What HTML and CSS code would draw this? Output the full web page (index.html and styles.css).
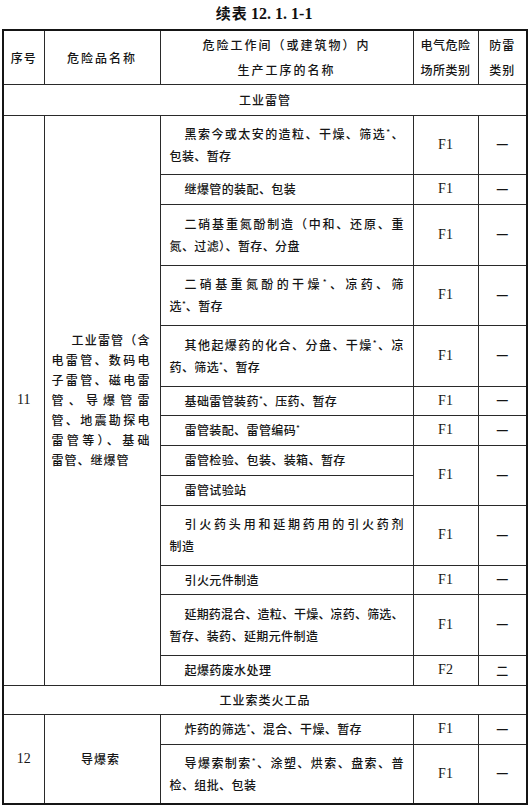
FILE: index.html
```html
<!DOCTYPE html>
<html lang="zh-CN">
<head>
<meta charset="utf-8">
<title>续表 12.1.1-1</title>
<link rel="stylesheet" href="styles.css">
</head>
<body>
<div class="title"><span class="cjk">续表</span> <span class="num">12. 1. 1-1</span></div>
<table class="tbl">
  <colgroup>
    <col class="c1"><col class="c2"><col class="c3"><col class="c4"><col class="c5">
  </colgroup>
  <thead>
    <tr class="r54">
      <th class="hd-no">序号</th>
      <th class="hd-name">危险品名称</th>
      <th class="hd-proc">危险工作间（或建筑物）内<br>生产工序的名称</th>
      <th class="hd-zone">电气危险<br>场所类别</th>
      <th class="hd-cls">防雷<br>类别</th>
    </tr>
  </thead>
  <tbody>
    <tr class="r31"><td colspan="5" class="sec">工业雷管</td></tr>
    <tr class="r59">
      <td rowspan="13" class="no">11</td>
      <td rowspan="13" class="name">
        <span class="nl j ind">工业雷管（含</span>
        <span class="nl j">电雷管、数码电</span>
        <span class="nl j">子雷管、磁电雷</span>
        <span class="nl j">管、导爆管雷</span>
        <span class="nl j">管、地震勘探电</span>
        <span class="nl j">雷管等）、基础</span>
        <span class="nl">雷管、继爆管</span>
      </td>
      <td class="proc"><span class="ln j ind">黑索今或太安的造粒、干燥、筛选<sup class="ast">*</sup>、</span><span class="ln">包装、暂存</span></td>
      <td class="zone">F1</td>
      <td class="cls">一</td>
    </tr>
    <tr class="r30">
      <td class="proc"><span class="ln ind">继爆管的装配、包装</span></td>
      <td class="zone">F1</td>
      <td class="cls">一</td>
    </tr>
    <tr class="r61">
      <td class="proc"><span class="ln j ind">二硝基重氮酚制造（中和、还原、重</span><span class="ln">氮、过滤）、暂存、分盘</span></td>
      <td class="zone">F1</td>
      <td class="cls">一</td>
    </tr>
    <tr class="r60">
      <td class="proc"><span class="ln j ind">二硝基重氮酚的干燥<sup class="ast">*</sup>、凉药、筛</span><span class="ln">选<sup class="ast">*</sup>、暂存</span></td>
      <td class="zone">F1</td>
      <td class="cls">一</td>
    </tr>
    <tr class="r61">
      <td class="proc"><span class="ln j ind">其他起爆药的化合、分盘、干燥<sup class="ast">*</sup>、凉</span><span class="ln">药、筛选<sup class="ast">*</sup>、暂存</span></td>
      <td class="zone">F1</td>
      <td class="cls">一</td>
    </tr>
    <tr class="r29">
      <td class="proc"><span class="ln ind">基础雷管装药<sup class="ast">*</sup>、压药、暂存</span></td>
      <td class="zone">F1</td>
      <td class="cls">一</td>
    </tr>
    <tr class="r30">
      <td class="proc"><span class="ln ind">雷管装配、雷管编码<sup class="ast">*</sup></span></td>
      <td class="zone">F1</td>
      <td class="cls">一</td>
    </tr>
    <tr class="r30">
      <td class="proc"><span class="ln ind">雷管检验、包装、装箱、暂存</span></td>
      <td rowspan="2" class="zone">F1</td>
      <td rowspan="2" class="cls">一</td>
    </tr>
    <tr class="r30">
      <td class="proc"><span class="ln ind">雷管试验站</span></td>
    </tr>
    <tr class="r60">
      <td class="proc"><span class="ln j ind">引火药头用和延期药用的引火药剂</span><span class="ln">制造</span></td>
      <td class="zone">F1</td>
      <td class="cls">一</td>
    </tr>
    <tr class="r29">
      <td class="proc"><span class="ln ind">引火元件制造</span></td>
      <td class="zone">F1</td>
      <td class="cls">一</td>
    </tr>
    <tr class="r61">
      <td class="proc"><span class="ln j ind">延期药混合、造粒、干燥、凉药、筛选、</span><span class="ln">暂存、装药、延期元件制造</span></td>
      <td class="zone">F1</td>
      <td class="cls">一</td>
    </tr>
    <tr class="r30">
      <td class="proc"><span class="ln ind">起爆药废水处理</span></td>
      <td class="zone">F2</td>
      <td class="cls">二</td>
    </tr>
    <tr class="r29"><td colspan="5" class="sec">工业索类火工品</td></tr>
    <tr class="r30">
      <td rowspan="2" class="no">12</td>
      <td rowspan="2" class="name name-c">导爆索</td>
      <td class="proc"><span class="ln ind">炸药的筛选<sup class="ast">*</sup>、混合、干燥、暂存</span></td>
      <td class="zone">F1</td>
      <td class="cls">一</td>
    </tr>
    <tr class="r60">
      <td class="proc"><span class="ln j ind">导爆索制索<sup class="ast">*</sup>、涂塑、烘索、盘索、普</span><span class="ln">检、组批、包装</span></td>
      <td class="zone">F1</td>
      <td class="cls">一</td>
    </tr>
  </tbody>
</table>
</body>
</html>
```

FILE: styles.css
```css
html, body {
  margin: 0;
  padding: 0;
  background: #ffffff;
}

body {
  color: #151515;
  font-family: "Noto Sans CJK SC", "Noto Sans", sans-serif;
  font-size: 12px;
  width: 528px;
}

.title {
  height: 29px;
  line-height: 26px;
  text-align: center;
  font-weight: 700;
  font-size: 15px;
  color: #111;
}

.title .cjk {
  letter-spacing: 1px;
}

.title .num {
  font-family: "Liberation Serif", serif;
  font-size: 16px;
  font-weight: 700;
}

.tbl {
  margin-left: 2px;
  width: 524px;
  table-layout: fixed;
  border-collapse: collapse;
  border: 2px solid #151515;
}

.c1 { width: 41px; }
.c2 { width: 116px; }
.c3 { width: 253px; }
.c4 { width: 65px; }
.c5 { width: 49px; }

.tbl th,
.tbl td {
  border: 1px solid #2a2a2a;
  padding: 0;
  vertical-align: middle;
  font-weight: 500;
}

.tbl th {
  text-align: center;
  line-height: 25px;
}

.hd-no { letter-spacing: 1px; }
.hd-name { letter-spacing: 2px; }
.hd-proc { letter-spacing: 2px; }
.hd-zone { letter-spacing: 0.5px; }
.hd-cls { letter-spacing: 1px; }

.r54 { height: 54px; }
.r31 { height: 31px; }
.r29 { height: 29px; }
.r30 { height: 30px; }
.r59 { height: 59px; }
.r60 { height: 60px; }
.r61 { height: 61px; }

.sec {
  text-align: center;
  letter-spacing: 1px;
}

.no {
  text-align: center;
  font-family: "Liberation Serif", serif;
  font-size: 14px;
}

.name {
  padding: 0 10px 0 7px !important;
  line-height: 20px;
}

.name-c {
  text-align: center;
  letter-spacing: 1px;
}

.nl {
  display: block;
  white-space: nowrap;
  text-align: left;
  letter-spacing: 1px;
}

.nl.j {
  text-align-last: justify;
  text-align: justify;
  letter-spacing: 0;
}

.proc {
  padding: 0 9px !important;
  line-height: 22px;
}

.ln {
  display: block;
  white-space: nowrap;
  text-align: left;
  letter-spacing: 0.4px;
}

.ln.j {
  text-align: justify;
  text-align-last: justify;
  letter-spacing: 0;
}

.ind {
  text-indent: 15px;
}

.nl.ind {
  text-indent: 20px;
}

.ast {
  font-size: 8px;
  line-height: 0;
  vertical-align: 4px;
  letter-spacing: 0;
}

.zone {
  text-align: center;
  font-family: "Liberation Serif", serif;
  font-size: 14px;
}

.cls {
  text-align: center;
}
```
